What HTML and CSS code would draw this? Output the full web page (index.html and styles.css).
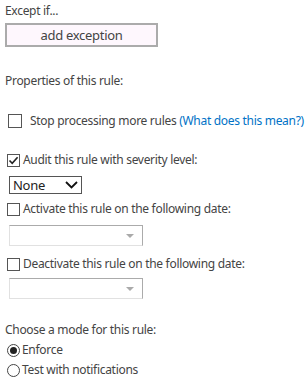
FILE: index.html
```html
<!DOCTYPE html>
<html lang="en">
<head>
    <meta charset="UTF-8">
    <title>Rule properties</title>
    <link rel="stylesheet" href="styles.css">
</head>
<body>
    <div class="panel">
        <div class="label except">Except if...</div>
        <button class="add-btn">add exception</button>

        <div class="label props">Properties of this rule:</div>

        <label class="check stop">
            <span class="box"></span>
            <span>Stop processing more rules <a class="link" href="#">(What does this mean?)</a></span>
        </label>

        <label class="check audit">
            <span class="box">
                <svg width="11" height="11" viewBox="0 0 11 11"><path d="M1.5 5.5 L4.2 8.3 L9.6 2.2" fill="none" stroke="#222" stroke-width="1.6"/></svg>
            </span>
            <span>Audit this rule with severity level:</span>
        </label>
        <div class="select">
            <span>None</span>
            <svg width="13" height="8" viewBox="0 0 13 8"><path d="M1 1 L6.5 6.5 L12 1" fill="none" stroke="#111" stroke-width="1.8"/></svg>
        </div>

        <label class="check activate">
            <span class="box"></span>
            <span>Activate this rule on the following date:</span>
        </label>
        <div class="date"><span class="caret"></span></div>

        <label class="check deactivate">
            <span class="box"></span>
            <span>Deactivate this rule on the following date:</span>
        </label>
        <div class="date"><span class="caret"></span></div>

        <div class="label mode">Choose a mode for this rule:</div>
        <label class="radio first">
            <span class="circle on"></span>
            <span>Enforce</span>
        </label>
        <label class="radio">
            <span class="circle"></span>
            <span>Test with notifications</span>
        </label>
    </div>
</body>
</html>
```

FILE: styles.css
```css
body {
    margin: 0;
    background: #fff;
    font-family: "Noto Sans", "Open Sans", sans-serif;
    font-size: 12px;
    letter-spacing: -0.3px;
    color: #444;
}

.panel {
    padding: 3px 0 0 5px;
    display: flex;
    flex-direction: column;
    align-items: flex-start;
}

.label {
    line-height: 16px;
}

.add-btn {
    margin-top: 4px;
    width: 153px;
    height: 24px;
    background: #fef7fd;
    border: 2px solid #ababab;
    font-family: inherit;
    font-size: 13px;
    letter-spacing: -0.3px;
    color: #444;
    padding: 0;
}

.props {
    margin-top: 26px;
}

.check {
    display: flex;
    align-items: center;
    gap: 3px;
    line-height: 16px;
    margin-left: 2px;
    white-space: nowrap;
}

.check .box {
    width: 11px;
    height: 11px;
    border: 1px solid #555;
    display: flex;
    align-items: center;
    justify-content: center;
}

.check.stop {
    margin-top: 24px;
    margin-left: 3px;
    gap: 8px;
}

.check.stop .box {
    width: 12px;
    height: 12px;
}

.check.audit {
    margin-top: 23px;
}

.check.activate {
    margin-top: 7px;
}

.check.deactivate {
    margin-top: 10px;
}

.link {
    color: #0072c6;
    text-decoration: none;
}

.select {
    margin: 8px 0 0 4px;
    width: 65px;
    height: 16px;
    border: 1px solid #555;
    display: flex;
    align-items: center;
    justify-content: space-between;
    padding: 0 3px 0 3px;
    font-size: 13px;
    color: #222;
}

.date {
    margin: 8px 0 0 4px;
    width: 132px;
    height: 19px;
    border: 1px solid #e1e1e1;
    border-top-color: #ababab;
    border-right-color: #ababab;
    position: relative;
}

.deactivate + .date {
    margin-top: 6px;
}

.caret {
    position: absolute;
    right: 8px;
    top: 8px;
    border-left: 4px solid transparent;
    border-right: 4px solid transparent;
    border-top: 4px solid #aaa;
}

.mode {
    margin-top: 23px;
}

.radio {
    display: flex;
    align-items: center;
    gap: 2px;
    line-height: 20px;
    margin-left: 2px;
}

.radio.first {
    margin-top: 2px;
}

.circle {
    width: 11px;
    height: 11px;
    border: 1px solid #444;
    border-radius: 50%;
    display: flex;
    align-items: center;
    justify-content: center;
}

.circle.on::after {
    content: "";
    width: 7px;
    height: 7px;
    border-radius: 50%;
    background: #222;
}
```
